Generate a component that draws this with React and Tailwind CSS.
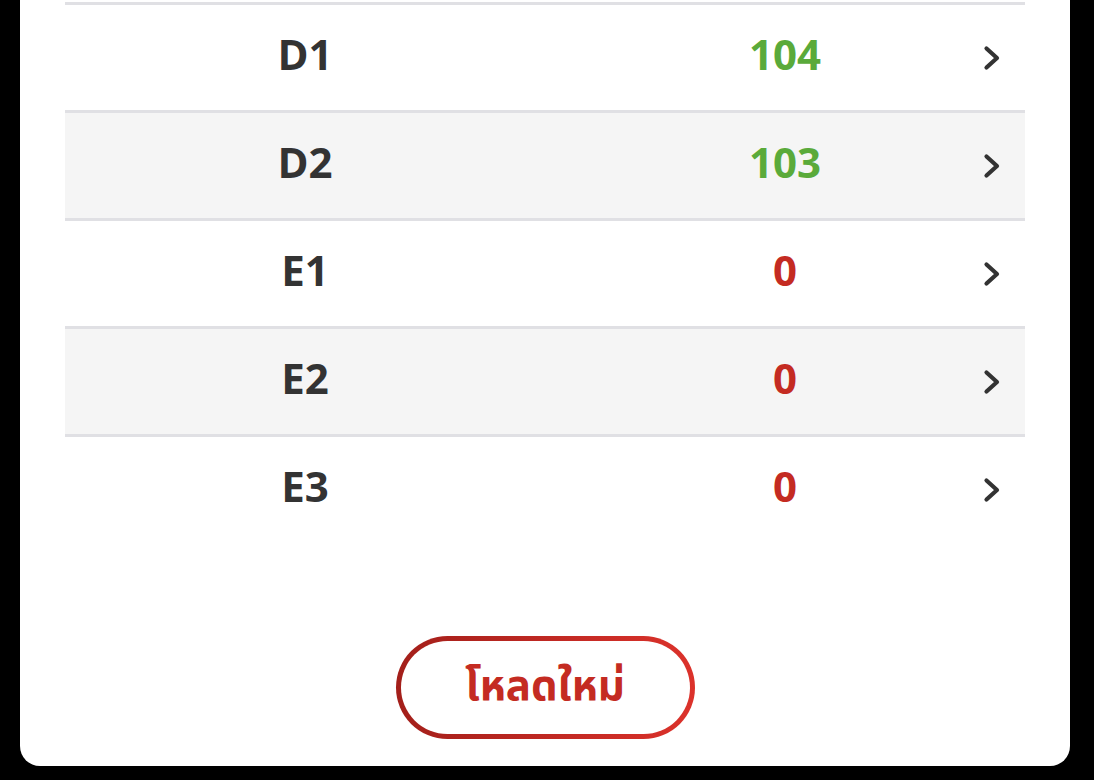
import React from "react";

const rows = [
  { name: "D1", value: "104", ok: true },
  { name: "D2", value: "103", ok: true },
  { name: "E1", value: "0", ok: false },
  { name: "E2", value: "0", ok: false },
  { name: "E3", value: "0", ok: false },
];

function Chevron() {
  return (
    <svg width="18" height="26" viewBox="0 0 18 26" fill="none">
      <polyline
        points="3.5,3.5 14,13 3.5,22.5"
        stroke="#333333"
        strokeWidth="4.2"
        strokeLinecap="round"
        strokeLinejoin="round"
      />
    </svg>
  );
}

export default function App() {
  return (
    <div className="min-h-[780px] w-full bg-black" style={{ fontFamily: '"Open Sans", "Noto Sans", sans-serif' }}>
      <div className="ml-[20px] w-[1050px] h-[766px] bg-white rounded-b-[20px] px-[45px] pt-[2px] flex flex-col">
        <div className="flex flex-col">
          {rows.map((r, i) => (
            <div
              key={r.name}
              className={`h-[108px] border-t-[3px] border-[#e0e0e4] grid grid-cols-[480px_480px] items-center ${
                i % 2 === 1 ? "bg-[#f5f5f5]" : "bg-white"
              }`}
            >
              <div className="text-center text-[42px] font-bold text-[#333333] leading-none mb-[8px]">
                {r.name}
              </div>
              <div className="grid grid-cols-[1fr_auto_1fr] items-center">
                <div />
                <div
                  className={`text-center text-[42px] font-bold leading-none mb-[8px] ${
                    r.ok ? "text-[#5aaa3a]" : "text-[#c42b22]"
                  }`}
                >
                  {r.value}
                </div>
                <div className="flex justify-end pr-[24px]">
                  <Chevron />
                </div>
              </div>
            </div>
          ))}
        </div>
        <div className="flex justify-center mt-[94px]">
          <button className="w-[299px] h-[103px] rounded-full p-[5px] bg-gradient-to-r from-[#a31f1a] to-[#dc322b]">
            <span
              className="flex h-full w-full items-center justify-center rounded-full bg-white text-[42px] font-bold text-[#c42b22]"
              style={{ fontFamily: '"Noto Sans Thai", "Noto Sans", "Open Sans", sans-serif' }}
            >
              โหลดใหม่
            </span>
          </button>
        </div>
      </div>
    </div>
  );
}
